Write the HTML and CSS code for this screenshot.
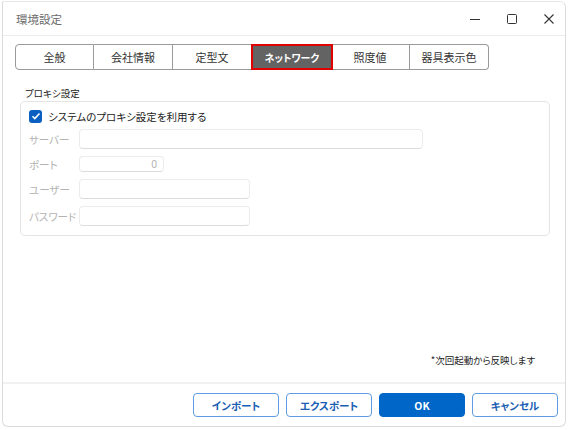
FILE: index.html
```html
<!DOCTYPE html>
<html lang="ja">
<head>
<meta charset="utf-8">
<link rel="stylesheet" href="styles.css">
</head>
<body>
<div class="window">
  <div class="titlebar">
    <span class="title">環境設定</span>
    <div class="controls">
      <svg class="ctl" width="12" height="12" viewBox="0 0 12 12"><path d="M1 6.5h10" stroke="#333" stroke-width="1"/></svg>
      <svg class="ctl" width="12" height="12" viewBox="0 0 12 12"><rect x="1.5" y="1.5" width="9" height="9" rx="1" fill="none" stroke="#333" stroke-width="1"/></svg>
      <svg class="ctl" width="12" height="12" viewBox="0 0 12 12"><path d="M1.5 1.5l9 9M10.5 1.5l-9 9" stroke="#333" stroke-width="1.1"/></svg>
    </div>
  </div>
  <div class="content">
    <div class="tabs">
      <div class="tab">全般</div>
      <div class="tab">会社情報</div>
      <div class="tab">定型文</div>
      <div class="tab active">ネットワーク</div>
      <div class="tab">照度値</div>
      <div class="tab">器具表示色</div>
    </div>
    <div class="section-label">プロキシ設定</div>
    <div class="group">
      <label class="check-row">
        <span class="checkbox"><svg width="10" height="10" viewBox="0 0 10 10"><path d="M1.5 5.2l2.3 2.3 4.7-5" fill="none" stroke="#fff" stroke-width="1.6"/></svg></span>
        <span>システムのプロキシ設定を利用する</span>
      </label>
      <div class="field-row r1"><span class="flabel">サーバー</span><div class="input w-server"></div></div>
      <div class="field-row r2"><span class="flabel">ポート</span><div class="input w-port">0</div></div>
      <div class="field-row r3"><span class="flabel">ユーザー</span><div class="input w-user"></div></div>
      <div class="field-row r4"><span class="flabel">パスワード</span><div class="input w-user"></div></div>
    </div>
    <div class="note">*次回起動から反映します</div>
  </div>
  <div class="footer">
    <button class="btn">インポート</button>
    <button class="btn">エクスポート</button>
    <button class="btn primary">OK</button>
    <button class="btn">キャンセル</button>
  </div>
</div>
</body>
</html>
```

FILE: styles.css
```css
html, body {
  margin: 0;
  padding: 0;
  background: #ffffff;
}
body {
  font-family: "Noto Sans CJK JP", "Noto Sans", sans-serif;
  font-feature-settings: "palt";
  color: #222;
}
.window {
  box-sizing: border-box;
  margin: 1px 0 0 2px;
  width: 564px;
  height: 426px;
  border: 1px solid #dcdcdc;
  border-top-color: #e8e8e8;
  border-radius: 0 6px 6px 6px;
  display: flex;
  flex-direction: column;
  background: #fff;
}
.titlebar {
  height: 33px;
  border-bottom: 1px solid #ececec;
  display: flex;
  align-items: center;
  justify-content: space-between;
  padding-left: 13px;
}
.title {
  font-size: 11.5px;
  color: #6b6b6b;
}
.controls {
  display: flex;
  align-items: center;
  gap: 25px;
  padding-right: 10px;
}
.ctl { display: block; }
.content {
  flex: 1;
  display: flex;
  flex-direction: column;
  padding: 8px 13px 0 12px;
}
.tabs {
  display: flex;
  height: 26px;
  width: 475px;
}
.tab {
  box-sizing: border-box;
  width: 79px;
  height: 26px;
  border: 1px solid #9a9a9a;
  border-left: none;
  display: flex;
  align-items: center;
  justify-content: center;
  font-size: 11px;
  color: #333;
  background: #fff;
}
.tab:first-child {
  border-left: 1px solid #9a9a9a;
  border-radius: 4px 0 0 4px;
}
.tab:last-child {
  border-radius: 0 4px 4px 0;
}
.tab.active {
  background: #636363;
  color: #fff;
  font-weight: bold;
  font-size: 10px;
  border: 2px solid #e00000;
  width: 82px;
  margin-left: -1px;
  margin-right: -2px;
  position: relative;
}
.section-label {
  margin-top: 17px;
  margin-left: 10px;
  font-size: 9.5px;
  line-height: 12px;
  color: #222;
}
.group {
  box-sizing: border-box;
  margin: 2px 0 0 5px;
  width: 530px;
  height: 135px;
  border: 1px solid #e4e4e4;
  border-radius: 5px;
  padding: 7px 0 0 8px;
}
.check-row {
  display: flex;
  align-items: center;
  gap: 6px;
  font-size: 10.5px;
  color: #222;
  height: 14px;
}
.checkbox {
  width: 13px;
  height: 13px;
  border-radius: 3px;
  background: #0a5fc0;
  display: flex;
  align-items: center;
  justify-content: center;
}
.checkbox svg { display: block; }
.field-row {
  display: flex;
  align-items: center;
}
.flabel {
  width: 50px;
  white-space: nowrap;
  font-size: 10.5px;
  color: #b3b3b3;
}
.input {
  box-sizing: border-box;
  height: 20px;
  border: 1px solid #ececec;
  border-bottom-color: #dcdcdc;
  border-radius: 4px;
  background: #fff;
}
.r1 { margin-top: 6px; }
.r2 { margin-top: 7px; }
.r3 { margin-top: 7px; }
.r4 { margin-top: 7px; }
.w-server { width: 344px; }
.w-port {
  width: 85px;
  height: 16px;
  font-size: 10.5px;
  color: #b3b3b3;
  text-align: right;
  padding-right: 6px;
  line-height: 14px;
}
.w-user { width: 171px; }
.note {
  margin-top: auto;
  margin-bottom: 15px;
  align-self: flex-end;
  margin-right: 17px;
  font-size: 9.5px;
  color: #222;
}
.footer {
  border-top: 2px solid #f1f1f1;
  height: 42px;
  display: flex;
  align-items: center;
  justify-content: flex-end;
  gap: 7px;
  padding-right: 7px;
}
.btn {
  box-sizing: border-box;
  width: 86px;
  height: 24px;
  border: 1.5px solid #5f9be0;
  border-radius: 4px;
  background: #fff;
  color: #1b5fb5;
  font-family: inherit;
  font-feature-settings: "palt";
  font-weight: bold;
  font-size: 10.5px;
  padding: 0;
}
.btn.primary {
  background: #0067c8;
  border-color: #0067c8;
  color: #fff;
}
```
